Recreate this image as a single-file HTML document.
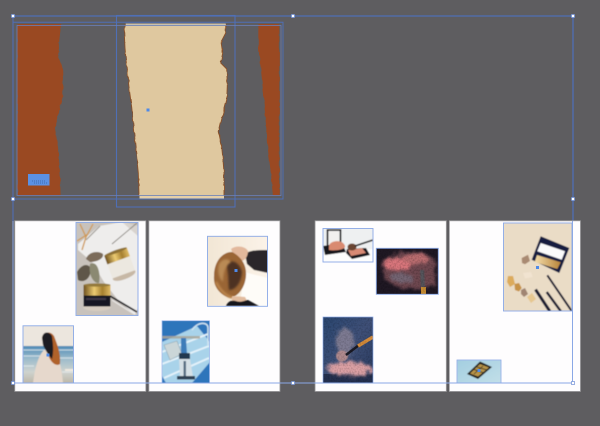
<!DOCTYPE html>
<html><head><meta charset="utf-8"><style>html,body{margin:0;padding:0;background:#5e5d60;width:600px;height:426px;overflow:hidden}svg{display:block}</style></head><body>
<svg width="600" height="426" viewBox="0 0 600 426" xmlns="http://www.w3.org/2000/svg">
<defs>
<filter id="b" x="-10%" y="-10%" width="120%" height="120%"><feGaussianBlur stdDeviation="0.45"/></filter>
<filter id="b1" x="-40%" y="-40%" width="180%" height="180%"><feGaussianBlur stdDeviation="1.1"/></filter>
<filter id="sp" x="-40%" y="-40%" width="180%" height="180%"><feTurbulence type="fractalNoise" baseFrequency="0.3" numOctaves="3" seed="4" result="n"/><feDisplacementMap in="SourceGraphic" in2="n" scale="9"/><feGaussianBlur stdDeviation="1.3"/></filter>
<filter id="torn" x="-5%" y="-5%" width="110%" height="110%"><feTurbulence type="fractalNoise" baseFrequency="0.18" numOctaves="2" seed="7" result="n"/><feDisplacementMap in="SourceGraphic" in2="n" scale="2.5"/></filter>
<filter id="grain" x="0" y="0" width="100%" height="100%"><feTurbulence type="fractalNoise" baseFrequency="0.6" numOctaves="2" seed="3"/><feColorMatrix values="0 0 0 0 0 0 0 0 0 0 0 0 0 0 0 0 0 0 2.2 -0.9"/><feGaussianBlur stdDeviation="0.35"/></filter>
<clipPath id="topc"><rect x="0" y="24" width="300" height="175"/></clipPath>
<clipPath id="c1"><rect x="76" y="222" width="62" height="93.5"/></clipPath>
<clipPath id="c2"><rect x="23" y="325.5" width="50.5" height="57.5"/></clipPath>
<clipPath id="c3"><rect x="207.5" y="236" width="60" height="70"/></clipPath>
<clipPath id="c4"><rect x="162" y="320.5" width="47.5" height="62.5"/></clipPath>
<clipPath id="c5"><rect x="323" y="228" width="50" height="34"/></clipPath>
<clipPath id="c6"><rect x="376" y="248" width="62" height="46"/></clipPath>
<clipPath id="c7"><rect x="323" y="317" width="50" height="66"/></clipPath>
<clipPath id="c8"><rect x="503.5" y="223" width="68.5" height="88"/></clipPath>
<clipPath id="c9"><rect x="457" y="360" width="44" height="23"/></clipPath>
<linearGradient id="gold" x1="0" x2="1" y1="0" y2="0"><stop offset="0" stop-color="#6d4f1c"/><stop offset=".4" stop-color="#eccb72"/><stop offset=".7" stop-color="#a57f30"/><stop offset="1" stop-color="#e0bc66"/></linearGradient>
<linearGradient id="sea" x1="0" x2="0" y1="0" y2="1"><stop offset="0" stop-color="#4f8ab6"/><stop offset=".35" stop-color="#9dbccb"/><stop offset=".7" stop-color="#cfd3cf"/><stop offset="1" stop-color="#bdb7a8"/></linearGradient>
<linearGradient id="night" x1="0" x2="1" y1="0" y2="1"><stop offset="0" stop-color="#2a4670"/><stop offset=".5" stop-color="#3f5078"/><stop offset="1" stop-color="#27385c"/></linearGradient>
<linearGradient id="tray" x1="0" x2="1" y1="0" y2="1"><stop offset="0" stop-color="#a3cee0"/><stop offset="1" stop-color="#c2dfe8"/></linearGradient>
<linearGradient id="shim" x1="0" x2="1" y1="0" y2="0"><stop offset="0" stop-color="#f3dcaa"/><stop offset="1" stop-color="#b9853a"/></linearGradient>
<linearGradient id="hbg" x1="0" x2="1" y1="0" y2="0"><stop offset="0" stop-color="#f2e6d5"/><stop offset="1" stop-color="#fbf3e8"/></linearGradient>
</defs>

<rect width="600" height="426" fill="#5e5d60"/>

<!-- top spread -->
<g clip-path="url(#topc)"><g filter="url(#torn)">
<path d="M17.3 20H61.7L60 34 59 43 58.5 57 61 64 62.7 70 63 84 62.7 97 60 106 59 113 56 122 55 128 56.5 138 58 147 59 160 60 173 60.7 200H17.3Z" fill="#9a4a20"/>
<path d="M258.3 20H279.3V200H273.3L271 174 268.3 153 266 125 263.3 93 261 70 258.3 47Z" fill="#9a4a20"/>
<path d="M125.7 20H225.7V33L221 42 222.7 53 220.7 63 226.7 69 227.3 85 226.7 100 222.7 115 218.7 132 221.7 147 223 160 224 173 224 204H139.3L138.3 173 135 140 131.7 107 129 87 126.7 67 125 48 124.3 33Z" fill="#dfc89f" stroke="#8a5028" stroke-width=".9"/>
</g></g>
<rect x="125.7" y="23.5" width="100" height="2.2" fill="#c8c0b0"/>
<rect x="17" y="195.5" width="264" height="3.5" fill="#5e5d60"/>
<rect x="139.5" y="195.5" width="84.5" height="3.5" fill="#e5cfa8"/>

<g fill="none" stroke="#4f6fb5">
<path d="M13 16H573V221" stroke-width="1.3"/>
<path d="M13 16V221" stroke-width="1.1"/>
<path d="M13 22.3H283V199H13" stroke-width="1"/>
<rect x="116.5" y="15.5" width="118.5" height="191.5" stroke-width="1.1"/>
<rect x="17" y="25.5" width="264" height="170" stroke-width=".8" stroke="#6a80b8"/>
</g>

<!-- pages -->
<g fill="#fefdfe" stroke="#a2a1a3" stroke-width=".8">
<rect x="14.8" y="220.8" width="131" height="170.6"/>
<rect x="148.9" y="220.8" width="131" height="170.6"/>
<rect x="315.1" y="220.8" width="131.2" height="170.6"/>
<rect x="449.4" y="220.8" width="131" height="170.6"/>
</g>

<!-- photo 1: jars -->
<g clip-path="url(#c1)"><g filter="url(#b)">
<rect x="76" y="222" width="62" height="94" fill="#c8c2bc"/>
<path d="M99 226L122 222 138 226V308L135 315 118 300 104 282 92 262 78 250 78 244Z" fill="#eeedec"/>
<path d="M122 222L138 226V236Z" fill="#d8d3ce"/>
<path d="M137 223L112 244" stroke="#85817c" stroke-width=".9" fill="none"/>
<path d="M100 226L86 240" stroke="#a09b95" stroke-width="1.2" fill="none"/>
<path d="M80 224L86 237 93 224M77 241L88 234M86 237L82 250" stroke="#cf9a55" stroke-width="1.3" fill="none"/>
<path d="M110 296L137 312" stroke="#1d1b20" stroke-width="1.8"/>
<path d="M112 300L134 314" stroke="#e9e7e5" stroke-width="1.2"/>
<path d="M86 259C88 252 98 250 103 254 104 259 96 262 90 262Z" fill="#7b6c5a"/>
<path d="M77 272C82 263 90 263 91 270 90 280 83 283 78 280Z" fill="#5f5648"/>
<path d="M90 264C97 260 101 272 99 283 94 284 88 275 90 264Z" fill="#8b8972"/>
<g transform="rotate(-20 120 264)">
<ellipse cx="120" cy="276" rx="12" ry="4" fill="#c7b8a5"/>
<rect x="108" y="258" width="24" height="17" fill="#ece8e0"/>
<rect x="108" y="251" width="24" height="9" fill="url(#gold)"/>
<ellipse cx="120" cy="251" rx="12" ry="1.6" fill="#8f7236"/>
</g>
<ellipse cx="97" cy="307" rx="14" ry="4" fill="#d6ccbf"/>
<rect x="83.5" y="295" width="27" height="11.5" fill="#171521"/>
<rect x="86" y="298" width="20" height="2" fill="#3c3947"/>
<rect x="83.5" y="285" width="27" height="10.5" fill="url(#gold)"/>
<ellipse cx="97" cy="285" rx="13.5" ry="1.6" fill="#94793a"/>
</g></g>

<!-- photo 2: girl -->
<g clip-path="url(#c2)"><g filter="url(#b)">
<rect x="23" y="325" width="51" height="21" fill="#ece6de"/>
<rect x="23" y="346" width="51" height="37" fill="url(#sea)"/>
<path d="M23 350H74M23 356H40M60 358H74M23 366H34M62 372H74" stroke="#e8eef0" stroke-width="1.2" opacity=".7"/>
<path d="M33 383C35 368 38 356 44 350L56 352C60 360 62 372 63 383Z" fill="#e6d8cc"/>
<path d="M42 338C43 331 51 331 54 336 57 344 61 353 60 364 56 367 50 362 48 354Z" fill="#b0622a"/>
<path d="M42 338C43 331 49 331 52 336 53 344 54 351 52 359 48 355 45 349 43 345Z" fill="#1f1a22"/>
<rect x="65" y="369" width="9" height="2" fill="#efe9df"/>
</g></g>

<!-- photo 3: hair -->
<g clip-path="url(#c3)"><g filter="url(#b)">
<rect x="207.5" y="236" width="60" height="70" fill="url(#hbg)"/>
<path d="M244 272L268 278V306H240Z" fill="#fefcf8"/>
<path d="M245 254C250 250 258 250 268 250V273L254 270 247 264Z" fill="#29262b"/>
<path d="M231 249C236 245 245 246 248 251 248 256 245 261 241 261 237 258 233 255 231 249Z" fill="#e2b89c"/>
<path d="M214 276C214 262 222 252 232 252 240 256 247 264 246 276 245 288 238 296 231 298 222 296 213 288 214 276Z" fill="#9a6534"/>
</g>
<path d="M226 264C232 258 240 263 242 272 241 284 235 290 229 290 228 282 229 274 226 264Z" fill="#4d3220" filter="url(#b1)"/>
<path d="M219 264C223 258 228 258 231 262 226 265 223 272 223 282 219 278 217 272 219 264Z" fill="#b98a55" filter="url(#b1)"/>
<path d="M216 282C220 290 226 296 233 298" stroke="#c38d52" stroke-width="2" fill="none" filter="url(#b1)"/>
<g filter="url(#b)">
<path d="M232 296L245 297 247 301 232 304Z" fill="#e2bc9f"/>
<path d="M226 306C228 301 232 300 236 301 242 303 245 300 248 300L259 306Z" fill="#19171b"/>
</g></g>

<!-- photo 4: mask & bottle -->
<g clip-path="url(#c4)"><g filter="url(#b)">
<rect x="162" y="320.5" width="48" height="63" fill="#2f74bb"/>
<path d="M162 342L197 326 210 342V362L192 383H166L162 376Z" fill="#a9d3ea"/>
<path d="M162 352L208 334M162 364L209 346M164 378L209 358" stroke="#e4f2fa" stroke-width="2" fill="none"/>
<path d="M192 330C197 322 208 321 208 328V345" stroke="#d3e6f2" stroke-width="1.5" fill="none"/>
<rect x="162" y="336" width="38" height="2.6" fill="#a9a699" opacity=".85"/>
<path d="M164 345L177 341 182 354 170 360Z" fill="#cbd6d8" stroke="#8ea6b4" stroke-width=".6"/>
<path d="M181 338H186L187 354H181Z" fill="#3d7cb9"/>
<rect x="179" y="353" width="11" height="6" fill="#22374f"/>
<path d="M179 359H190L193 377 180 378Z" fill="#d5e0e6"/>
<rect x="183.5" y="361" width="2.5" height="15" fill="#566d82"/>
<rect x="177" y="376" width="18" height="3.5" fill="#2f3f52"/>
</g></g>

<!-- photo 5: blush -->
<g clip-path="url(#c5)"><g filter="url(#b)">
<rect x="323" y="228" width="50" height="34" fill="#eef0f1"/>
<path d="M323 252L373 249V262H323Z" fill="#fdfdfd"/>
<rect x="327.5" y="230" width="13" height="16" fill="#f2f0ee" stroke="#17141a" stroke-width="1.7"/>
<path d="M323 246L342 243 346 252 325 255Z" fill="#17141a"/>
<path d="M329 246C330 240 343 239 345 246 346 250 333 251 329 250Z" fill="#d98a70"/>
<path d="M346 253L347 249 366 248 370 255 352 259Z" fill="#17141a"/>
<path d="M348 250L362 248 366 253 351 256Z" fill="#d98a74"/>
<ellipse cx="352" cy="247" rx="4.5" ry="3.5" fill="#6a4532"/>
<path d="M355 246L373 240" stroke="#18151a" stroke-width="1.7"/>
</g></g>

<!-- photo 6: pink powder -->
<g clip-path="url(#c6)">
<rect x="376" y="248" width="62" height="46" fill="#1f1823"/>
<path d="M382 262L400 252 424 253 436 260 435 284 420 289 400 288 385 280Z" fill="#6e4650" filter="url(#sp)"/>
<ellipse cx="398" cy="264" rx="15" ry="6.5" fill="#d9767c" filter="url(#sp)"/>
<ellipse cx="416" cy="259" rx="13" ry="5" fill="#bb6d70" filter="url(#sp)"/>
<ellipse cx="402" cy="278" rx="12" ry="5" fill="#756573" filter="url(#sp)"/>
<path d="M420 270L424 270 425 287 421 287Z" fill="#55555c" filter="url(#b)"/>
<rect x="421" y="287" width="5" height="7" fill="#c58b32"/>
<rect x="376" y="248" width="62" height="46" filter="url(#grain)" opacity=".22"/>
</g>

<!-- photo 7: blue powder -->
<g clip-path="url(#c7)">
<rect x="323" y="317" width="50" height="66" fill="url(#night)"/>
<rect x="323" y="374" width="50" height="9" fill="#24304f"/>
<ellipse cx="345" cy="342" rx="9" ry="14" fill="#7d7a92" filter="url(#sp)"/>
<ellipse cx="350" cy="369" rx="23" ry="7" fill="#dba0a4" filter="url(#sp)"/>
<ellipse cx="342" cy="356" rx="6" ry="5.5" fill="#b08a8e" filter="url(#b)"/>
<path d="M346 355L359 345" stroke="#1a1a24" stroke-width="2.4"/>
<path d="M358 346L373 337" stroke="#d68c3a" stroke-width="3.4"/>
<rect x="323" y="317" width="50" height="66" filter="url(#grain)" opacity=".18"/>
</g>

<!-- photo 8: palette -->
<g clip-path="url(#c8)"><g filter="url(#b)">
<rect x="503.5" y="223" width="69" height="88" fill="#eadcc6"/>
<path d="M540.7 236.3L569.3 248 559.3 273 531.7 259.7Z" fill="#161f3f"/>
<path d="M540.7 243L565 251.3 561.7 259.7 537.3 251.3Z" fill="#fbfbfb"/>
<path d="M537 255L560.7 262.3 557.3 269 534.7 262Z" fill="url(#shim)"/>
<path d="M521.7 258L528 254.7 530 261 525 264.3 522 263Z" fill="#a98a72"/>
<path d="M523 273L531 272 532.7 277 525 278.5Z" fill="#f1e3d0"/>
<path d="M508 276L513 276 515 284 510 287 507 282Z" fill="#dcab5c"/>
<path d="M514.5 284L519 283 521.7 288 519 291.5 515 290Z" fill="#c69247"/>
<path d="M521 290L525 288 528 294 524 297 521 294Z" fill="#a08573"/>
<path d="M527 297L532 293 536 299 531 303Z" fill="#e6c790"/>
<path d="M547.3 275.3L572 311.5" stroke="#1a1c33" stroke-width="2"/>
<path d="M535.5 289.5L550 311.5" stroke="#1a1c33" stroke-width="3"/>
<path d="M546.7 292L561 311.5" stroke="#1a1c33" stroke-width="2.4"/>
</g></g>

<!-- photo 9: tray -->
<g clip-path="url(#c9)"><g filter="url(#b)">
<rect x="457" y="360" width="44" height="23" fill="url(#tray)"/>
<path d="M467 374L480 361.5 492 367 478 379Z" fill="#1e1a1c"/>
<path d="M470 373.5L480 364 489 367.5 478 376.5Z" fill="#b89448"/>
<path d="M474 369.5L484 373M477 367L487 370M474 374L483 366" stroke="#231f20" stroke-width=".7"/>
</g></g>

<!-- frames on photos -->
<g fill="none" stroke="#8aa8e6">
<rect x="76" y="222.5" width="62" height="93" stroke-width=".9"/>
<rect x="23" y="325.8" width="50.5" height="57.2" stroke-width=".9"/>
<rect x="207.5" y="236.3" width="60" height="70" stroke-width=".9"/>
<rect x="162" y="320.8" width="47.5" height="62" stroke-width=".6"/>
<rect x="323" y="228.5" width="50" height="33.5" stroke-width=".9"/>
<rect x="376.3" y="248.3" width="62" height="46" stroke-width=".9"/>
<rect x="323" y="317" width="50" height="66" stroke-width=".7"/>
<rect x="503.5" y="223" width="68.5" height="88" stroke-width=".9"/>
<rect x="457" y="360" width="44" height="23" stroke-width=".8"/>
<path d="M13 221V383H572.5V221" stroke-width="1"/>
</g>

<!-- small blue box -->
<rect x="28" y="174" width="21.5" height="11.5" fill="#5b91e4"/>
<path d="M32 181H46M34 183H47" stroke="#3f6db0" stroke-width="1" stroke-dasharray="1 1"/>

<!-- center dots -->
<g fill="#4f8ae8">
<rect x="146.5" y="108.5" width="3" height="3"/>
<rect x="46.5" y="353.5" width="3" height="3"/>
<rect x="234.5" y="269" width="3" height="3"/>
<rect x="536" y="266" width="3" height="3"/>
<rect x="477.5" y="369" width="3" height="3"/>
</g>

<!-- handles -->
<g fill="#fff" stroke="#6f8fd6" stroke-width=".7">
<rect x="11.5" y="14.5" width="3" height="3"/>
<rect x="291.5" y="14.5" width="3" height="3"/>
<rect x="571.5" y="14.5" width="3" height="3"/>
<rect x="11.5" y="197.5" width="3" height="3"/>
<rect x="571.5" y="197.5" width="3" height="3"/>
<rect x="11.5" y="381.5" width="3" height="3"/>
<rect x="291.5" y="381.5" width="3" height="3"/>
<rect x="571.5" y="381.5" width="3" height="3"/>
</g>
</svg>
</body></html>
